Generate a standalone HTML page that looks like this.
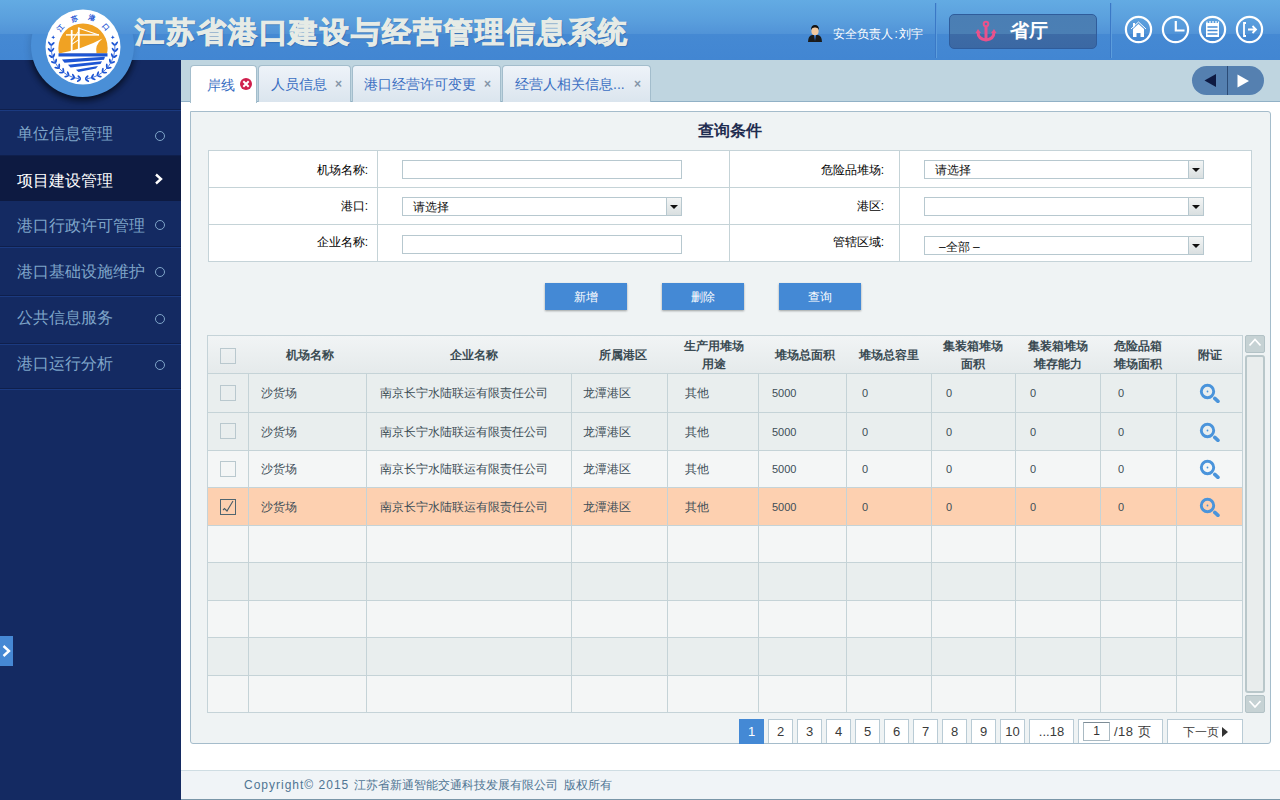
<!DOCTYPE html>
<html><head><meta charset="utf-8">
<style>
*{box-sizing:border-box;margin:0;padding:0}
html,body{width:1280px;height:800px;overflow:hidden;background:#fff;font-family:"Liberation Sans",sans-serif;font-size:12px;color:#333}
.a{position:absolute}
.t{position:absolute;white-space:nowrap;line-height:1}
#hdr{left:0;top:0;width:1280px;height:60px;background:linear-gradient(#63abe3 0px,#5a9fdd 20px,#5193d7 34px,#4589d3 34px,#4286d2 60px)}
#side{left:0;top:60px;width:181px;height:740px;background:#142a62}
#tabbar{left:181px;top:60px;width:1099px;height:42px;background:#bfd5e0;border-bottom:1px solid #91b1c6}
#main{left:181px;top:102px;width:1099px;height:668px;background:#fff}
#panel{left:190px;top:111px;width:1081px;height:633px;background:#eff3f4;border:1px solid #a5bccb;border-radius:0 3px 3px 3px}
#footer{left:181px;top:770px;width:1099px;height:30px;background:#f0f4f7;border-top:1px solid #cfdde3;border-bottom:1px solid #7a96a8}
.sep{top:3px;width:2px;height:55px;border-left:1px solid #3a78c6;border-right:1px solid #5c9ddc}
.mi{left:0;width:181px;height:46px;border-bottom:1px solid #0f1f4c;}
.mi .t{left:17px;top:15px;font-size:16px;color:#7fa5c9}
.mi i{position:absolute;left:155px;width:10px;height:10px;border:1.6px solid #7fa5c9;border-radius:50%}
.tab{top:65px;height:37px;border:1px solid #a3bdcc;border-bottom:none;border-radius:4px 4px 0 0;background:linear-gradient(#eef3f9,#dbe5ee)}
.tab .t{top:11px;font-size:14px;color:#3a6ec2}
.tab b{position:absolute;top:12px;font-size:12px;font-weight:bold;color:#8496a8;line-height:1}

.lb{position:absolute;white-space:nowrap;line-height:1;font-size:12px;color:#000;text-align:right}
.inp{position:absolute;height:19px;background:#fff;border:1px solid #b7c8cf}
.sel{position:absolute;height:19px;background:#fff;border:1px solid #b7c8cf}
.sel i{position:absolute;right:0;top:0;width:15px;height:17px;border-left:1px solid #b7c8cf;background:linear-gradient(#f3f5f5,#d9dfe0)}
.sel i:after{content:"";position:absolute;left:3px;top:7px;border-left:4px solid transparent;border-right:4px solid transparent;border-top:4px solid #111}
.sel span{position:absolute;left:10px;top:3px;font-size:12px;line-height:1;color:#111;white-space:nowrap}
.btn{position:absolute;top:283px;width:82px;height:27px;background:#4489d5;box-shadow:0 1px 2px rgba(0,0,0,.35);color:#fff;font-size:12px;line-height:29px;text-align:center}
.hl{position:absolute;height:1px;background:#c5d3d7}
.vl{position:absolute;width:1px;background:#c5d3d7}
.hd{position:absolute;font-size:12px;font-weight:bold;color:#3a4a52;line-height:18px;text-align:center;white-space:nowrap}
.cell{position:absolute;font-size:12px;color:#3d4d56;line-height:1;white-space:nowrap}
.cb{position:absolute;left:220px;width:16px;height:16px;border:1px solid #b9c8ce;background:transparent}
.pg{position:absolute;top:719px;height:24px;border:1px solid #b9cbd5;border-bottom:none;background:#fff;font-size:13px;color:#3a3a3a;text-align:center;line-height:24px}
</style></head><body>
<div id="hdr" class="a">
  <div class="t" id="ttl" style="left:135px;top:18px;font-size:29px;font-weight:900;letter-spacing:1.9px;-webkit-text-stroke:0.9px #e6ebe6;color:#e6ebe6;text-shadow:1px 1px 1px rgba(20,60,120,.45)">江苏省港口建设与经营管理信息系统</div>
  <svg class="a" style="left:806px;top:24px" width="18" height="19" viewBox="0 0 18 19">
    <path d="M2 18 Q2 12 6 11 L12 11 Q16 12 16 18 Z" fill="#1b1b1b"/>
    <path d="M8 11 L9 17 L10 11 Z" fill="#2f7be0"/>
    <ellipse cx="9" cy="7" rx="3.6" ry="4.3" fill="#f2c9a0"/>
    <path d="M5 6 Q5 1 9 1 Q13 1 13 6 Q12 3 9 3.5 Q6 3 5 6Z" fill="#111"/>
  </svg>
  <div class="t" style="left:833px;top:28px;font-size:12px;color:#fff">安全负责人<span style="margin:0 1.5px">:</span>刘宇</div>
  <div class="a sep" style="left:935px"></div>
  <div class="a" style="left:949px;top:14px;width:148px;height:35px;border:1px solid #2f5c9b;border-radius:5px;background:linear-gradient(#4a7eb4 0,#4b7fb4 19px,#3d6ba6 19px,#3b68a3 100%)"></div>
  <svg class="a" style="left:975px;top:20px" width="22" height="22" viewBox="0 0 22 22">
    <circle cx="11" cy="4" r="2.3" fill="none" stroke="#e9528c" stroke-width="2"/>
    <path d="M11 6 V19" stroke="#e9528c" stroke-width="3"/>
    <path d="M3 12 Q3 19 11 20 Q19 19 19 12" fill="none" stroke="#e9528c" stroke-width="3"/>
    <path d="M0.5 13 L3 9 L6 13 Z M16 13 L19 9 L21.5 13 Z" fill="#e9528c"/>
  </svg>
  <div class="t" style="left:1010px;top:21px;font-size:19px;font-weight:bold;color:#fff">省厅</div>
  <div class="a sep" style="left:1110px"></div>
  <svg class="a" style="left:1120px;top:12px" width="160" height="36" viewBox="1120 12 160 36">
    <g fill="none" stroke="#fff" stroke-width="2.2">
      <circle cx="1138.5" cy="29.5" r="12.6"/>
      <circle cx="1175.5" cy="29.5" r="12.6"/>
      <circle cx="1212.5" cy="29.5" r="12.6"/>
      <circle cx="1249.5" cy="29.5" r="12.6"/>
    </g>
    <path d="M1131 29 L1138.5 22 L1146 29" fill="none" stroke="#fff" stroke-width="1"/>
    <path d="M1133 29 L1138.5 24 L1144 29 V37 H1140.5 V33 H1136.5 V37 H1133 Z" fill="#fff"/>
    <path d="M1133 23 H1135 V26 L1133 28 Z" fill="#fff"/>
    <path d="M1175.8 21 V30.5 H1184.5" fill="none" stroke="#fff" stroke-width="2.2"/>
    <rect x="1206" y="23" width="13" height="14" fill="#fff"/>
    <path d="M1207 21.5 v2 M1210 21 v2.5 M1213 21 v2.5 M1216 21 v2.5 M1218.5 21.5 v2" stroke="#fff" stroke-width="1.2"/>
    <path d="M1207.5 27 H1217.5 M1207.5 30.5 H1217.5 M1207.5 34 H1217.5" stroke="#4a8ed6" stroke-width="1.3"/>
    <path d="M1246 23 H1244 V36 H1246" fill="none" stroke="#fff" stroke-width="1.8"/>
    <path d="M1248 29.5 H1256 M1252.5 26 L1256 29.5 L1252.5 33" fill="none" stroke="#fff" stroke-width="1.8"/>
  </svg>
</div>

<div id="side" class="a">
  <div class="a" style="left:0;top:49px;width:181px;height:1px;background:#0f1f4c"></div>
  <div class="a" style="left:0;top:50px;width:181px;height:1px;background:#1b3a80"></div>
  <div class="a mi" style="top:51px;height:45px"><div class="t">单位信息管理</div><i style="top:20px"></i></div>
  <div class="a" style="left:0;top:96px;width:181px;height:45px;background:#0d1a41"><div class="t" style="left:17px;top:17px;font-size:16px;color:#fff">项目建设管理</div>
    <svg class="a" style="left:153px;top:17px" width="12" height="12" viewBox="0 0 12 12"><path d="M3 1.5 L8 6 L3 10.5" fill="none" stroke="#fff" stroke-width="2.4"/></svg></div>
  <div class="a mi" style="top:141px;height:46px"><div class="t" style="top:17px">港口行政许可管理</div><i style="top:19px"></i></div>
  <div class="a" style="left:0;top:187px;width:181px;height:1px;background:#1b3a80"></div>
  <div class="a mi" style="top:188px;height:48px"><div class="t" style="top:16px">港口基础设施维护</div><i style="top:19px"></i></div>
  <div class="a" style="left:0;top:236px;width:181px;height:1px;background:#1b3a80"></div>
  <div class="a mi" style="top:237px;height:47px"><div class="t" style="top:13px">公共信息服务</div><i style="top:17px"></i></div>
  <div class="a" style="left:0;top:284px;width:181px;height:1px;background:#1b3a80"></div>
  <div class="a mi" style="top:285px;height:44px"><div class="t" style="top:11px">港口运行分析</div><i style="top:15px"></i></div>
  <div class="a" style="left:0;top:329px;width:181px;height:1px;background:#1b3a80"></div>
  <div class="a" style="left:0;top:576px;width:13px;height:30px;background:#4688d4"></div>
  <svg class="a" style="left:0;top:576px" width="13" height="30" viewBox="0 0 13 30"><path d="M3.5 10 L9 15 L3.5 20" fill="none" stroke="#fff" stroke-width="2.4"/></svg>
</div>

<div id="tabbar" class="a"></div>
<div id="main" class="a"></div>
<div id="panel" class="a"></div>
<div id="footer" class="a"></div>

<div class="a" style="left:190px;top:65px;width:67px;height:38px;border:1px solid #a3bdcc;border-bottom:none;border-radius:4px 4px 0 0;background:#fff"></div>
<div class="t" style="left:207px;top:78px;font-size:14px;color:#3a6ec2">岸线</div>
<svg class="a" style="left:239px;top:77px" width="14" height="14" viewBox="0 0 14 14"><circle cx="7" cy="7" r="6" fill="#d01f4c"/><path d="M4.3 4.3 L9.7 9.7 M9.7 4.3 L4.3 9.7" stroke="#fff" stroke-width="2"/></svg>
<div class="a tab" style="left:258px;width:93px"><div class="t" style="left:12px">人员信息</div><b style="left:76px">×</b></div>
<div class="a tab" style="left:352px;width:149px"><div class="t" style="left:11px">港口经营许可变更</div><b style="left:131px">×</b></div>
<div class="a tab" style="left:502px;width:149px"><div class="t" style="left:12px">经营人相关信息...</div><b style="left:131px">×</b></div>
<div class="a" style="left:1192px;top:66px;width:72px;height:29px;border-radius:15px;background:#5580b0"></div>
<div class="a" style="left:1227px;top:66px;width:1px;height:29px;background:#2c4c76"></div>
<svg class="a" style="left:1200px;top:70px" width="60" height="22" viewBox="1200 70 60 22"><path d="M1204.5 80.5 L1216 74 L1216 87 Z" fill="#0e1a42"/><path d="M1237.5 74.5 L1249 81 L1237.5 87.5 Z" fill="#fff"/></svg>

<div class="t" style="left:698px;top:123px;font-size:16px;font-weight:bold;color:#1f2d50">查询条件</div>
<div class="a" style="left:208px;top:150px;width:1044px;height:112px;background:#fff;border:1px solid #c5d3d8"></div>
<div class="hl" style="left:209px;top:187px;width:1042px"></div>
<div class="hl" style="left:209px;top:224px;width:1042px"></div>
<div class="vl" style="left:377px;top:151px;height:110px"></div>
<div class="vl" style="left:729px;top:151px;height:110px"></div>
<div class="vl" style="left:899px;top:151px;height:110px"></div>
<div class="lb" style="right:912px;top:164px">机场名称:</div>
<div class="lb" style="right:912px;top:200px">港口:</div>
<div class="lb" style="right:912px;top:236px">企业名称:</div>
<div class="lb" style="right:396px;top:164px">危险品堆场:</div>
<div class="lb" style="right:396px;top:200px">港区:</div>
<div class="lb" style="right:396px;top:236px">管辖区域:</div>
<div class="inp" style="left:402px;top:160px;width:280px"></div>
<div class="sel" style="left:402px;top:197px;width:280px"><span>请选择</span><i></i></div>
<div class="inp" style="left:402px;top:235px;width:280px"></div>
<div class="sel" style="left:924px;top:160px;width:280px"><span>请选择</span><i></i></div>
<div class="sel" style="left:924px;top:197px;width:280px"><i></i></div>
<div class="sel" style="left:924px;top:236px;width:280px"><span style="left:14px;top:4px">–全部 –</span><i></i></div>
<div class="btn" style="left:545px">新增</div>
<div class="btn" style="left:662px">删除</div>
<div class="btn" style="left:779px">查询</div>
<div class="a" style="left:207px;top:335px;width:1036px;height:378px;border:1px solid #c5d3d8;background:#f4f6f6"></div>
<div class="a" style="left:208px;top:336px;width:1034px;height:37px;background:linear-gradient(#f1f4f5,#e5eaeb)"></div>
<div class="a" style="left:208px;top:374px;width:1034px;height:38px;background:#e9eeee"></div>
<div class="a" style="left:208px;top:413px;width:1034px;height:37px;background:#e9eeee"></div>
<div class="a" style="left:208px;top:451px;width:1034px;height:36px;background:#f4f6f6"></div>
<div class="a" style="left:208px;top:488px;width:1034px;height:37px;background:#fdd0b0"></div>
<div class="a" style="left:208px;top:526px;width:1034px;height:36px;background:#f4f6f6"></div>
<div class="a" style="left:208px;top:563px;width:1034px;height:37px;background:#e9eeee"></div>
<div class="a" style="left:208px;top:601px;width:1034px;height:36px;background:#f4f6f6"></div>
<div class="a" style="left:208px;top:638px;width:1034px;height:37px;background:#e9eeee"></div>
<div class="a" style="left:208px;top:676px;width:1034px;height:36px;background:#f4f6f6"></div>
<div class="hl" style="left:208px;top:373px;width:1034px"></div>
<div class="hl" style="left:208px;top:412px;width:1034px"></div>
<div class="hl" style="left:208px;top:450px;width:1034px"></div>
<div class="hl" style="left:208px;top:487px;width:1034px"></div>
<div class="hl" style="left:208px;top:525px;width:1034px"></div>
<div class="hl" style="left:208px;top:562px;width:1034px"></div>
<div class="hl" style="left:208px;top:600px;width:1034px"></div>
<div class="hl" style="left:208px;top:637px;width:1034px"></div>
<div class="hl" style="left:208px;top:675px;width:1034px"></div>
<div class="vl" style="left:248px;top:374px;height:338px"></div>
<div class="vl" style="left:366px;top:374px;height:338px"></div>
<div class="vl" style="left:571px;top:374px;height:338px"></div>
<div class="vl" style="left:667px;top:374px;height:338px"></div>
<div class="vl" style="left:758px;top:374px;height:338px"></div>
<div class="vl" style="left:846px;top:374px;height:338px"></div>
<div class="vl" style="left:931px;top:374px;height:338px"></div>
<div class="vl" style="left:1015px;top:374px;height:338px"></div>
<div class="vl" style="left:1100px;top:374px;height:338px"></div>
<div class="vl" style="left:1176px;top:374px;height:338px"></div>
<div class="cb" style="top:348px"></div>
<div class="cb" style="top:385px"></div>
<div class="cb" style="top:423px"></div>
<div class="cb" style="top:461px"></div>
<div class="cb" style="top:499px;border-color:#4f6570"></div><svg class="a" style="left:220px;top:499px" width="16" height="16" viewBox="0 0 16 16"><path d="M3 11 L4.5 9.5 L7 12 L13 2" fill="none" stroke="#4a5d66" stroke-width="1.1"/></svg>
<div class="hd" style="left:250px;width:120px;top:346px">机场名称</div>
<div class="hd" style="left:414px;width:120px;top:346px">企业名称</div>
<div class="hd" style="left:563px;width:120px;top:346px">所属港区</div>
<div class="hd" style="left:654px;width:120px;top:337px">生产用堆场<br>用途</div>
<div class="hd" style="left:745px;width:120px;top:346px">堆场总面积</div>
<div class="hd" style="left:829px;width:120px;top:346px">堆场总容里</div>
<div class="hd" style="left:913px;width:120px;top:337px">集装箱堆场<br>面积</div>
<div class="hd" style="left:998px;width:120px;top:337px">集装箱堆场<br>堆存能力</div>
<div class="hd" style="left:1078px;width:120px;top:337px">危险品箱<br>堆场面积</div>
<div class="hd" style="left:1150px;width:120px;top:346px">附证</div>
<div class="cell" style="left:261px;top:387px">沙货场</div>
<div class="cell" style="left:380px;top:387px">南京长宁水陆联运有限责任公司</div>
<div class="cell" style="left:583px;top:387px">龙潭港区</div>
<div class="cell" style="left:685px;top:387px">其他</div>
<div class="cell" style="left:772px;top:388px;font-size:11px">5000</div>
<div class="cell" style="left:862px;top:388px;font-size:11px">0</div>
<div class="cell" style="left:946px;top:388px;font-size:11px">0</div>
<div class="cell" style="left:1030px;top:388px;font-size:11px">0</div>
<div class="cell" style="left:1118px;top:388px;font-size:11px">0</div>
<svg class="a" style="left:1197px;top:381px" width="24" height="22" viewBox="0 0 24 22"><circle cx="10.5" cy="10.5" r="6.2" fill="none" stroke="#4a94db" stroke-width="2.9"/><circle cx="10.5" cy="10.5" r="0.9" fill="#4a94db"/><path d="M17.8 17.4 L21 20.3" stroke="#4a94db" stroke-width="3.6" stroke-linecap="round"/></svg>
<div class="cell" style="left:261px;top:426px">沙货场</div>
<div class="cell" style="left:380px;top:426px">南京长宁水陆联运有限责任公司</div>
<div class="cell" style="left:583px;top:426px">龙潭港区</div>
<div class="cell" style="left:685px;top:426px">其他</div>
<div class="cell" style="left:772px;top:427px;font-size:11px">5000</div>
<div class="cell" style="left:862px;top:427px;font-size:11px">0</div>
<div class="cell" style="left:946px;top:427px;font-size:11px">0</div>
<div class="cell" style="left:1030px;top:427px;font-size:11px">0</div>
<div class="cell" style="left:1118px;top:427px;font-size:11px">0</div>
<svg class="a" style="left:1197px;top:420px" width="24" height="22" viewBox="0 0 24 22"><circle cx="10.5" cy="10.5" r="6.2" fill="none" stroke="#4a94db" stroke-width="2.9"/><circle cx="10.5" cy="10.5" r="0.9" fill="#4a94db"/><path d="M17.8 17.4 L21 20.3" stroke="#4a94db" stroke-width="3.6" stroke-linecap="round"/></svg>
<div class="cell" style="left:261px;top:463px">沙货场</div>
<div class="cell" style="left:380px;top:463px">南京长宁水陆联运有限责任公司</div>
<div class="cell" style="left:583px;top:463px">龙潭港区</div>
<div class="cell" style="left:685px;top:463px">其他</div>
<div class="cell" style="left:772px;top:464px;font-size:11px">5000</div>
<div class="cell" style="left:862px;top:464px;font-size:11px">0</div>
<div class="cell" style="left:946px;top:464px;font-size:11px">0</div>
<div class="cell" style="left:1030px;top:464px;font-size:11px">0</div>
<div class="cell" style="left:1118px;top:464px;font-size:11px">0</div>
<svg class="a" style="left:1197px;top:457px" width="24" height="22" viewBox="0 0 24 22"><circle cx="10.5" cy="10.5" r="6.2" fill="none" stroke="#4a94db" stroke-width="2.9"/><circle cx="10.5" cy="10.5" r="0.9" fill="#4a94db"/><path d="M17.8 17.4 L21 20.3" stroke="#4a94db" stroke-width="3.6" stroke-linecap="round"/></svg>
<div class="cell" style="left:261px;top:501px">沙货场</div>
<div class="cell" style="left:380px;top:501px">南京长宁水陆联运有限责任公司</div>
<div class="cell" style="left:583px;top:501px">龙潭港区</div>
<div class="cell" style="left:685px;top:501px">其他</div>
<div class="cell" style="left:772px;top:502px;font-size:11px">5000</div>
<div class="cell" style="left:862px;top:502px;font-size:11px">0</div>
<div class="cell" style="left:946px;top:502px;font-size:11px">0</div>
<div class="cell" style="left:1030px;top:502px;font-size:11px">0</div>
<div class="cell" style="left:1118px;top:502px;font-size:11px">0</div>
<svg class="a" style="left:1197px;top:495px" width="24" height="22" viewBox="0 0 24 22"><circle cx="10.5" cy="10.5" r="6.2" fill="none" stroke="#4a94db" stroke-width="2.9"/><circle cx="10.5" cy="10.5" r="0.9" fill="#4a94db"/><path d="M17.8 17.4 L21 20.3" stroke="#4a94db" stroke-width="3.6" stroke-linecap="round"/></svg>
<div class="a" style="left:1245px;top:335px;width:20px;height:18px;background:#c6d2d4;border:1px solid #b3c2c6;border-radius:2px"></div>
<svg class="a" style="left:1245px;top:335px" width="20" height="18" viewBox="0 0 20 18"><path d="M4.5 10.5 L10 4.5 L15.5 10.5" fill="none" stroke="#fff" stroke-width="1.8"/></svg>
<div class="a" style="left:1245px;top:355px;width:20px;height:338px;background:#e9eded;border:2px solid #b9c7ca;border-radius:3px"></div>
<div class="a" style="left:1245px;top:695px;width:20px;height:18px;background:#c6d2d4;border:1px solid #b3c2c6;border-radius:2px"></div>
<svg class="a" style="left:1245px;top:695px" width="20" height="18" viewBox="0 0 20 18"><path d="M4.5 6 L10 12 L15.5 6" fill="none" stroke="#fff" stroke-width="1.8"/></svg>
<div class="pg" style="left:739px;width:25px;height:25px;background:#4489d5;border-color:#4489d5;color:#fff">1</div>
<div class="pg" style="left:768px;width:25px">2</div>
<div class="pg" style="left:797px;width:25px">3</div>
<div class="pg" style="left:826px;width:25px">4</div>
<div class="pg" style="left:855px;width:25px">5</div>
<div class="pg" style="left:884px;width:25px">6</div>
<div class="pg" style="left:913px;width:25px">7</div>
<div class="pg" style="left:942px;width:25px">8</div>
<div class="pg" style="left:971px;width:25px">9</div>
<div class="pg" style="left:1000px;width:25px">10</div>
<div class="pg" style="left:1029px;width:45px">...18</div>
<div class="pg" style="left:1078px;width:85px;text-align:left"><span style="position:absolute;left:35px;top:0;letter-spacing:.5px">/18 <span style="font-size:13px">页</span></span></div>
<div class="a" style="left:1083px;top:722px;width:27px;height:19px;border:1px solid #a9b9c2;border-top-color:#7d8c96;background:#fff;font-size:12px;line-height:17px;text-align:center;color:#333">1</div>
<div class="pg" style="left:1167px;width:76px;font-family:'Liberation Sans',sans-serif;font-size:12px">下一页<span style="display:inline-block;margin-left:3px;border-top:5px solid transparent;border-bottom:5px solid transparent;border-left:6px solid #333;vertical-align:-1px"></span></div>
<div class="t" style="left:244px;top:779px;font-size:12px;color:#4f7593"><span style="letter-spacing:1px">Copyright© 2015 </span>江苏省新通智能交通科技发展有限公司 &nbsp;版权所有</div>

<svg class="a" style="left:0;top:0" width="181" height="110" viewBox="0 0 181 110">
<defs>
<filter id="sh" x="-40%" y="-40%" width="180%" height="180%"><feGaussianBlur stdDeviation="3.5"/></filter>
<clipPath id="cl34"><rect x="0" y="34" width="181" height="80"/></clipPath>
<clipPath id="cl60"><rect x="0" y="60" width="181" height="60"/></clipPath>
<clipPath id="sun"><rect x="40" y="0" width="90" height="53.5"/></clipPath>
<clipPath id="wc"><circle cx="83" cy="47" r="36.5"/></clipPath>
</defs>
<g clip-path="url(#cl60)"><circle cx="82.5" cy="48.5" r="52" fill="#000" opacity=".6" filter="url(#sh)"/></g>
<g clip-path="url(#cl34)"><circle cx="81.5" cy="46.5" r="52" fill="#000" opacity=".12" filter="url(#sh)"/></g>
<g clip-path="url(#cl34)"><circle cx="82.5" cy="45.5" r="51.5" fill="#4a8fd7"/></g>
<circle cx="83" cy="47" r="37.5" fill="#fff"/>
<circle cx="83" cy="48" r="24.6" fill="#f0a223" clip-path="url(#sun)"/>
<g fill="#fff">
<path d="M59 53.5 Q83 49 102.5 38.5 Q94.5 45 96.5 53.5 Z"/>
<rect x="70.8" y="30" width="1.8" height="21"/>
<rect x="77.9" y="27.5" width="1.8" height="22"/>
<rect x="66" y="34.2" width="33" height="1.4"/>
<path d="M71.5 41 L78.8 30 L79.6 30.6 L72.3 41.6Z M71.5 44 L78.8 39 L79.4 39.8 L72.1 44.8Z"/>
<path d="M78.5 27.5 L99 34.5 L98.6 35.5 L78.1 28.5 Z"/>
</g>
<g fill="#1d55d4" clip-path="url(#wc)">
<rect x="58.5" y="53.3" width="49" height="3.2"/>
<path d="M62 59.5 L105 56.8 L104 59.8 L64.5 62.8 Z"/>
<path d="M68 64.8 L102 61.3 L100.5 64 L70.5 67.6 Z"/>
<path d="M76 69.8 L98 66 L96 68.6 L78.5 72 Z"/>
</g>
<g fill="#1d55d4">
<ellipse cx="49.58" cy="43.49" rx="2.4" ry="0.95" transform="rotate(236.0 49.58 43.49)"/><ellipse cx="52.77" cy="43.82" rx="2.4" ry="0.95" transform="rotate(316.0 52.77 43.82)"/><ellipse cx="49.53" cy="50.00" rx="2.4" ry="0.95" transform="rotate(224.9 49.53 50.00)"/><ellipse cx="52.72" cy="49.72" rx="2.4" ry="0.95" transform="rotate(304.9 52.72 49.72)"/><ellipse cx="50.74" cy="56.40" rx="2.4" ry="0.95" transform="rotate(213.8 50.74 56.40)"/><ellipse cx="53.81" cy="55.51" rx="2.4" ry="0.95" transform="rotate(293.8 53.81 55.51)"/><ellipse cx="53.16" cy="62.45" rx="2.4" ry="0.95" transform="rotate(202.6 53.16 62.45)"/><ellipse cx="56.00" cy="60.98" rx="2.4" ry="0.95" transform="rotate(282.6 56.00 60.98)"/><ellipse cx="56.70" cy="67.92" rx="2.4" ry="0.95" transform="rotate(191.5 56.70 67.92)"/><ellipse cx="59.21" cy="65.92" rx="2.4" ry="0.95" transform="rotate(271.5 59.21 65.92)"/><ellipse cx="61.23" cy="72.60" rx="2.4" ry="0.95" transform="rotate(180.4 61.23 72.60)"/><ellipse cx="63.31" cy="70.16" rx="2.4" ry="0.95" transform="rotate(260.4 63.31 70.16)"/><ellipse cx="66.58" cy="76.32" rx="2.4" ry="0.95" transform="rotate(169.2 66.58 76.32)"/><ellipse cx="68.15" cy="73.52" rx="2.4" ry="0.95" transform="rotate(249.2 68.15 73.52)"/><ellipse cx="72.55" cy="78.93" rx="2.4" ry="0.95" transform="rotate(158.1 72.55 78.93)"/><ellipse cx="73.54" cy="75.89" rx="2.4" ry="0.95" transform="rotate(238.1 73.54 75.89)"/><ellipse cx="78.91" cy="80.35" rx="2.4" ry="0.95" transform="rotate(147.0 78.91 80.35)"/><ellipse cx="79.30" cy="77.17" rx="2.4" ry="0.95" transform="rotate(227.0 79.30 77.17)"/><ellipse cx="116.42" cy="43.49" rx="2.4" ry="0.95" transform="rotate(124.0 116.42 43.49)"/><ellipse cx="113.23" cy="43.82" rx="2.4" ry="0.95" transform="rotate(44.0 113.23 43.82)"/><ellipse cx="116.47" cy="50.00" rx="2.4" ry="0.95" transform="rotate(135.1 116.47 50.00)"/><ellipse cx="113.28" cy="49.72" rx="2.4" ry="0.95" transform="rotate(55.1 113.28 49.72)"/><ellipse cx="115.26" cy="56.40" rx="2.4" ry="0.95" transform="rotate(146.2 115.26 56.40)"/><ellipse cx="112.19" cy="55.51" rx="2.4" ry="0.95" transform="rotate(66.2 112.19 55.51)"/><ellipse cx="112.84" cy="62.45" rx="2.4" ry="0.95" transform="rotate(157.4 112.84 62.45)"/><ellipse cx="110.00" cy="60.98" rx="2.4" ry="0.95" transform="rotate(77.4 110.00 60.98)"/><ellipse cx="109.30" cy="67.92" rx="2.4" ry="0.95" transform="rotate(168.5 109.30 67.92)"/><ellipse cx="106.79" cy="65.92" rx="2.4" ry="0.95" transform="rotate(88.5 106.79 65.92)"/><ellipse cx="104.77" cy="72.60" rx="2.4" ry="0.95" transform="rotate(179.6 104.77 72.60)"/><ellipse cx="102.69" cy="70.16" rx="2.4" ry="0.95" transform="rotate(99.6 102.69 70.16)"/><ellipse cx="99.42" cy="76.32" rx="2.4" ry="0.95" transform="rotate(190.8 99.42 76.32)"/><ellipse cx="97.85" cy="73.52" rx="2.4" ry="0.95" transform="rotate(110.8 97.85 73.52)"/><ellipse cx="93.45" cy="78.93" rx="2.4" ry="0.95" transform="rotate(201.9 93.45 78.93)"/><ellipse cx="92.46" cy="75.89" rx="2.4" ry="0.95" transform="rotate(121.9 92.46 75.89)"/><ellipse cx="87.09" cy="80.35" rx="2.4" ry="0.95" transform="rotate(213.0 87.09 80.35)"/><ellipse cx="86.70" cy="77.17" rx="2.4" ry="0.95" transform="rotate(133.0 86.70 77.17)"/><path d="M51.18 43.66 A32 32 0 0 0 79.10 78.76" fill="none" stroke="#1d55d4" stroke-width="0.8"/><path d="M114.82 43.66 A32 32 0 0 1 86.90 78.76" fill="none" stroke="#1d55d4" stroke-width="0.8"/></g>
<g fill="#1d55d4" font-size="6.8" font-weight="bold" font-family="Liberation Sans, sans-serif" text-anchor="middle">
<text x="60.22" y="29.78" transform="rotate(310.6 60.22 27.48)">江</text><text x="74.18" y="20.63" transform="rotate(342.9 74.18 18.33)">苏</text><text x="91.52" y="20.54" transform="rotate(376.5 91.52 18.24)">港</text><text x="105.64" y="29.62" transform="rotate(409.0 105.64 27.32)">口</text>
</g>
<g fill="#1d55d4"><path d="M53.23 35.33 L53.83 36.73 L55.23 37.33 L53.83 37.93 L53.23 39.33 L52.63 37.93 L51.23 37.33 L52.63 36.73Z"/><path d="M112.77 35.33 L113.37 36.73 L114.77 37.33 L113.37 37.93 L112.77 39.33 L112.17 37.93 L110.77 37.33 L112.17 36.73Z"/></g>
</svg>

</body></html>
